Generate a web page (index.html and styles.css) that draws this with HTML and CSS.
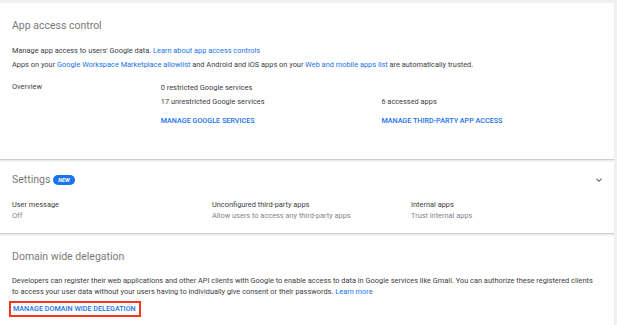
FILE: index.html
```html
<!DOCTYPE html>
<html lang="en">
<head>
    <meta charset="UTF-8">
    <meta name="viewport" content="width=device-width, initial-scale=1.0">
    <title>Security - API controls</title>
    <link rel="stylesheet" href="styles.css">
</head>
<body>
    <div class="page">
        <section class="card card-access">
            <h2 class="card-title">App access control</h2>
            <p class="line">Manage app access to users' Google data. <a href="#">Learn about app access controls</a></p>
            <p class="line">Apps on your <a href="#">Google Workspace Marketplace allowlist</a> and Android and iOS apps on your <a href="#">Web and mobile apps list</a> are automatically trusted.</p>
            <div class="overview">
                <div class="overview-label">Overview</div>
                <div class="overview-col">
                    <div class="stat">0 restricted Google services</div>
                    <div class="stat">17 unrestricted Google services</div>
                    <a class="action" href="#">MANAGE GOOGLE SERVICES</a>
                </div>
                <div class="overview-col">
                    <div class="stat"></div>
                    <div class="stat">6 accessed apps</div>
                    <a class="action" href="#">MANAGE THIRD-PARTY APP ACCESS</a>
                </div>
            </div>
        </section>

        <section class="card card-settings">
            <div class="settings-head">
                <h2 class="card-title">Settings <span class="badge">NEW</span></h2>
                <svg class="chevron" viewBox="0 0 24 24" width="12" height="12"><path d="M7.41 8.59 12 13.17l4.59-4.58L18 10l-6 6-6-6z" fill="#5f6368"/></svg>
            </div>
            <div class="settings-grid">
                <div class="setting">
                    <div class="setting-name">User message</div>
                    <div class="setting-value">Off</div>
                </div>
                <div class="setting">
                    <div class="setting-name">Unconfigured third-party apps</div>
                    <div class="setting-value">Allow users to access any third-party apps</div>
                </div>
                <div class="setting">
                    <div class="setting-name">Internal apps</div>
                    <div class="setting-value">Trust internal apps</div>
                </div>
            </div>
        </section>

        <section class="card card-delegation">
            <h2 class="card-title">Domain wide delegation</h2>
            <p class="para">Developers can register their web applications and other API clients with Google to enable access to data in Google services like Gmail. You can authorize these registered clients to access your user data without your users having to individually give consent or their passwords. <a href="#">Learn more</a></p>
            <a class="action boxed" href="#">MANAGE DOMAIN WIDE DELEGATION</a>
        </section>
    </div>
</body>
</html>
```

FILE: styles.css
```css
body {
    margin: 0;
    background-color: #f1f1f1;
    font-family: 'Roboto', 'Liberation Sans', sans-serif;
    color: #3c4043;
    font-size: 7.4px;
}
a {
    color: #1a73e8;
    text-decoration: none;
}
.page {
    padding-top: 3px;
    padding-right: 3px;
    display: flex;
    flex-direction: column;
    gap: 3px;
}
.card {
    background-color: #ffffff;
    box-shadow: 0 1px 1px rgba(0, 0, 0, 0.15);
    padding: 0 12px;
    box-sizing: border-box;
}
.card-title {
    font-size: 10.5px;
    line-height: 12px;
    font-weight: 400;
    color: #7a7a7a;
    margin: 0;
    display: flex;
    align-items: center;
    gap: 3px;
}
.card-access {
    height: 156px;
    padding-top: 17px;
}
.card-access .card-title {
    margin-bottom: 12px;
}
.line {
    margin: 0;
    line-height: 14px;
}
.overview {
    display: flex;
    margin-top: 9px;
}
.overview-label {
    width: 149px;
    line-height: 14px;
    margin-top: -1px;
}
.overview-col {
    width: 221px;
    display: flex;
    flex-direction: column;
    align-items: flex-start;
}
.stat {
    line-height: 14px;
    height: 14px;
}
.action {
    display: inline-block;
    font-size: 7.2px;
    font-weight: 500;
    margin-top: 7px;
    line-height: 10px;
}
.card-settings {
    height: 71px;
    padding-top: 12px;
}
.settings-head {
    display: flex;
    justify-content: space-between;
    align-items: center;
}
.chevron {
    margin-right: -3px;
}
.badge {
    background-color: #1a73e8;
    color: #ffffff;
    font-size: 5.5px;
    font-weight: 700;
    font-style: italic;
    border-radius: 5px;
    padding: 1.5px 5px;
    line-height: 7px;
}
.settings-grid {
    display: grid;
    grid-template-columns: 200px 199px 1fr;
    margin-top: 13px;
}
.setting-name {
    line-height: 11px;
}
.setting-value {
    line-height: 11px;
    color: #80868b;
}
.card-delegation {
    height: 89px;
    padding-top: 15px;
}
.card-delegation .card-title {
    margin-bottom: 12px;
}
.para {
    margin: 0;
    max-width: 585px;
    line-height: 11px;
}
.boxed {
    margin-top: 4px;
    margin-left: -3px;
    padding: 1px 3px 1px 2px;
    border: 2px solid #f4361d;
}
```
